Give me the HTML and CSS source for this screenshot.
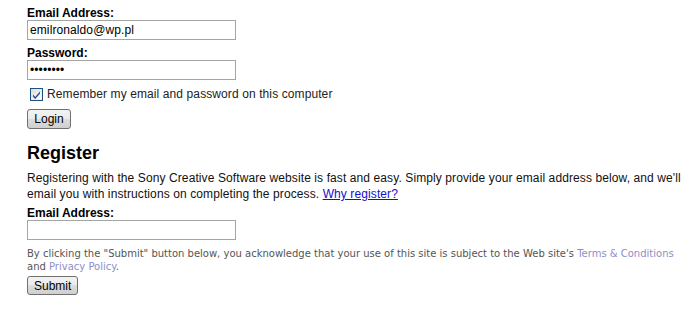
FILE: index.html
```html
<!DOCTYPE html>
<html>
<head>
<meta charset="utf-8">
<link rel="stylesheet" href="styles.css">
</head>
<body>
<div class="page">
  <form class="login">
    <label class="lbl">Email Address:</label>
    <input class="field" type="text" value="emilronaldo@wp.pl">
    <label class="lbl lbl-pw">Password:</label>
    <input class="field" type="password" value="password">
    <label class="remember"><span class="cb"><svg width="13" height="13" viewBox="0 0 13 13"><rect x="0.5" y="0.5" width="12" height="12" fill="#dfe6f2" stroke="#1c5180"/><rect x="1.5" y="1.5" width="10" height="10" fill="url(#g)"/><defs><linearGradient id="g" x1="0" y1="0" x2="1" y2="1"><stop offset="0" stop-color="#dcdcdc"/><stop offset="1" stop-color="#ffffff"/></linearGradient></defs><path d="M3 6.5 L5.2 9 L10 3.5 L10 5.5 L5.2 11 L3 8.5 Z" fill="#21418e"/></svg></span>Remember my email and password on this computer</label>
    <button type="button" class="btn btn-login">Login</button>
  </form>
  <h2 class="heading">Register</h2>
  <p class="intro">Registering with the Sony Creative Software website is fast and easy. Simply provide your email address below, and we'll email you with instructions on completing the process. <a href="#" class="link">Why register?</a></p>
  <label class="lbl">Email Address:</label>
  <input class="field" type="text" value="">
  <p class="legal">By clicking the "Submit" button below, you acknowledge that your use of this site is subject to the Web site's <a href="#" class="soft">Terms &amp; Conditions</a> and <a href="#" class="soft">Privacy Policy</a>.</p>
  <button type="button" class="btn btn-submit">Submit</button>
</div>
</body>
</html>
```
FILE: styles.css
```css
html, body {
  margin: 0;
  padding: 0;
  background: #ffffff;
}
.page {
  padding: 6px 0 0 27px;
  font-family: "Liberation Sans", Arial, sans-serif;
  font-size: 12px;
  color: #000;
  display: flex;
  flex-direction: column;
  align-items: flex-start;
}
.login {
  display: flex;
  flex-direction: column;
  align-items: flex-start;
  margin: 0;
}
.lbl {
  font-weight: bold;
  font-size: 12px;
  line-height: 14px;
  display: block;
}
.lbl-pw {
  margin-top: 6px;
}
.field {
  box-sizing: border-box;
  width: 209px;
  height: 20px;
  margin: 0;
  border: 1px solid #a5a5a5;
  padding: 1px 2px;
  font-family: "Liberation Sans", Arial, sans-serif;
  font-size: 12px;
  letter-spacing: 0.1px;
  color: #000;
  outline: none;
}
.remember {
  display: flex;
  align-items: center;
  margin: 7px 0 0 3px;
  font-size: 12px;
  line-height: 14px;
  letter-spacing: 0.1px;
  color: #222;
}
.cb {
  display: inline-flex;
  width: 13px;
  height: 13px;
  margin-right: 4px;
}
.btn {
  box-sizing: border-box;
  height: 20px;
  padding: 0 6px;
  border: 1px solid #707070;
  border-radius: 3px;
  background: linear-gradient(#f2f2f2, #ebebeb 50%, #dddddd 50%, #cfcfcf);
  font-family: "Liberation Sans", Arial, sans-serif;
  font-size: 12px;
  color: #000;
  line-height: 16px;
}
.btn-login {
  margin-top: 8px;
  width: 44px;
}
.heading {
  margin: 13px 0 0 0;
  font-size: 18px;
  line-height: 22px;
  font-weight: bold;
}
.intro {
  margin: 6px 0 4px 0;
  font-size: 12px;
  line-height: 16px;
  letter-spacing: 0.1px;
  color: #111;
}
.link {
  color: #1a0dcc;
  text-decoration: underline;
}
.legal {
  margin: 7px 0 3px 0;
  font-family: "DejaVu Sans", Verdana, sans-serif;
  font-size: 10px;
  line-height: 13px;
  color: #555;
}
.soft {
  color: #8e8ec6;
  text-decoration: none;
}
.btn-submit {
  width: 51px;
  height: 19px;
}
```
